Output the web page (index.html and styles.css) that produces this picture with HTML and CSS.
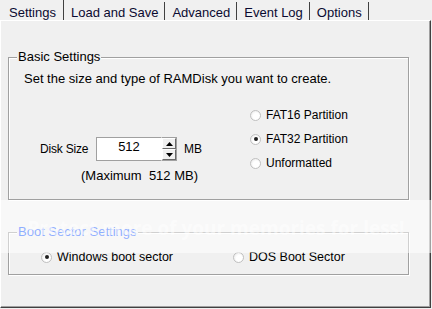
FILE: index.html
```html
<!DOCTYPE html>
<html>
<head>
<meta charset="utf-8">
<link rel="stylesheet" href="styles.css">
</head>
<body>
<div class="window">
  <div class="tabs">
    <div class="tab active">Settings</div>
    <div class="tab">Load and Save</div>
    <div class="tab">Advanced</div>
    <div class="tab">Event Log</div>
    <div class="tab">Options</div>
  </div>
  <div class="panel">
    <div class="group basic">
      <span class="group-title">Basic Settings</span>
      <p class="desc">Set the size and type of RAMDisk you want to create.</p>
      <div class="options">
        <div class="size-col">
          <div class="size-row">
            <span class="size-label">Disk Size</span>
            <div class="spin">
              <span class="spin-value">512</span>
              <div class="spin-btns">
                <span class="spin-btn"><svg width="7" height="4" viewBox="0 0 7 4"><path d="M3.5 0 L7 4 L0 4 Z" fill="#000"/></svg></span>
                <span class="spin-btn"><svg width="7" height="4" viewBox="0 0 7 4"><path d="M0 0 L7 0 L3.5 4 Z" fill="#000"/></svg></span>
              </div>
            </div>
            <span class="unit">MB</span>
          </div>
          <div class="max">(Maximum&nbsp; 512 MB)</div>
        </div>
        <div class="radio-col">
          <label class="radio"><span class="dot"></span>FAT16 Partition</label>
          <label class="radio"><span class="dot on"></span>FAT32 Partition</label>
          <label class="radio"><span class="dot"></span>Unformatted</label>
        </div>
      </div>
    </div>
    <div class="group boot">
      <span class="group-title blue">Boot Sector Settings</span>
      <div class="boot-row">
        <label class="radio big win"><span class="dot on"></span>Windows boot sector</label>
        <label class="radio big"><span class="dot"></span>DOS Boot Sector</label>
      </div>
    </div>
  </div>
  <div class="band"><span class="band-text">Protect more of your memories for less!</span></div>
</div>
</body>
</html>
```
FILE: styles.css
```css
html, body {
  margin: 0;
  padding: 0;
  background: #f0f0f0;
}
body {
  font-family: "Liberation Sans", Arial, sans-serif;
  color: #000;
  width: 432px;
  height: 309px;
  overflow: hidden;
}
.window {
  position: relative;
  width: 432px;
  height: 309px;
}
.tabs {
  display: flex;
  height: 20px;
}
.tab {
  font-size: 13px;
  line-height: 18px;
  padding: 2px 6px 0 7px;
  border-right: 1px solid #404040;
  margin-top: 2px;
  height: 18px;
  box-sizing: border-box;
  color: #0a0a30;
}
.tab.active {
  padding-left: 9px;
  padding-right: 7px;
  margin-top: 0;
  height: 20px;
  padding-top: 4px;
}
.panel {
  width: 431px;
  height: 288px;
  box-sizing: border-box;
  border-top: 1px solid #ffffff;
  border-left: 1px solid #ffffff;
  border-right: 1px solid #404040;
  border-bottom: 1px solid #404040;
  box-shadow: inset -1px -1px 0 #a0a0a0;
  padding: 36px 0 0 7px;
}
.group {
  position: relative;
  width: 401px;
  box-sizing: border-box;
  border: 1px solid #a0a0a0;
  box-shadow: 1px 1px 0 #ffffff, inset 1px 1px 0 #ffffff;
}
.group-title {
  position: absolute;
  top: -9px;
  left: 8px;
  padding: 0 1px;
  font-size: 13px;
  line-height: 15px;
  background: #f0f0f0;
}
.group-title.blue {
  color: #1a5cff;
}
.basic {
  height: 143px;
  padding: 13px 0 0 15px;
}
.desc {
  margin: 0;
  font-size: 13px;
  line-height: 15px;
}
.options {
  display: flex;
  margin-top: 17px;
}
.size-col {
  width: 226px;
  padding-top: 34px;
  padding-left: 16px;
  box-sizing: border-box;
}
.size-row {
  display: flex;
  align-items: center;
  height: 24px;
}
.size-label {
  font-size: 12px;
  letter-spacing: -0.2px;
  width: 56px;
}
.spin {
  display: flex;
  height: 24px;
}
.spin-value {
  width: 65px;
  height: 24px;
  box-sizing: border-box;
  border: 1px solid #a0a0a0;
  border-right: none;
  background: #fff;
  font-size: 13px;
  text-align: center;
  line-height: 15px;
  padding-top: 1px;
}
.spin-btns {
  display: flex;
  flex-direction: column;
  width: 16px;
  height: 24px;
  box-sizing: border-box;
  border: 1px solid #a0a0a0;
  border-left: 1px solid #ffffff;
  background: #fff;
}
.spin-btn {
  flex: 1;
  display: flex;
  align-items: center;
  justify-content: center;
  background: #f0f0f0;
  border: 1px solid;
  border-color: #fff #696969 #696969 #fff;
}
.unit {
  font-size: 12px;
  margin-left: 7px;
}
.max {
  font-size: 13px;
  line-height: 15px;
  margin-top: 7px;
  padding-left: 41px;
}
.radio-col {
  display: flex;
  flex-direction: column;
}
.radio {
  display: flex;
  align-items: center;
  height: 24px;
  font-size: 12px;
}
.dot {
  position: relative;
  width: 11px;
  height: 11px;
  box-sizing: border-box;
  border-radius: 50%;
  border: 1px solid #c0c0c0;
  background: radial-gradient(circle at 60% 60%, #ffffff 40%, #e4e4e4 100%);
  margin-right: 5px;
}
.dot.on::after {
  content: "";
  position: absolute;
  left: 2.5px;
  top: 2.5px;
  width: 4px;
  height: 4px;
  border-radius: 50%;
  background: #202020;
}
.boot {
  margin-top: 32px;
  height: 43px;
  padding: 12px 0 0 32px;
}
.boot-row {
  display: flex;
}
.radio.big {
  font-size: 12.5px;
}
.radio.win {
  width: 192px;
}
.band {
  position: absolute;
  left: 0;
  top: 200px;
  width: 432px;
  height: 53px;
  background: rgba(255, 255, 255, 0.5);
  display: flex;
  justify-content: center;
  box-sizing: border-box;
  padding-top: 15px;
}
.band-text {
  font-family: "Open Sans", sans-serif;
  font-weight: 700;
  font-size: 19px;
  line-height: 26px;
  height: 26px;
  white-space: nowrap;
  color: rgba(255, 255, 255, 0.55);
}
```
